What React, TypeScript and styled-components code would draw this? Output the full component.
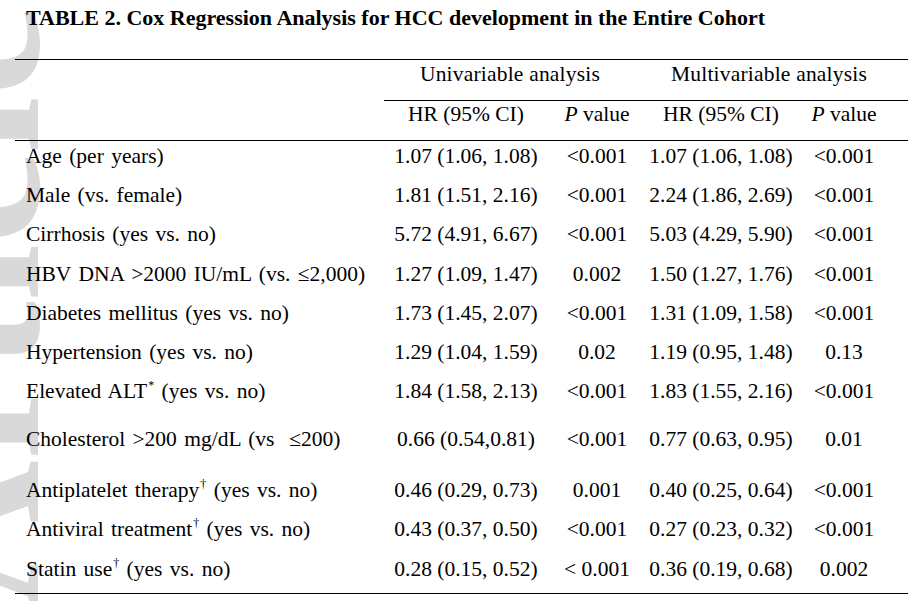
import React from 'react';
import styled, { createGlobalStyle } from 'styled-components';

const GlobalStyle = createGlobalStyle`
  html, body {
    margin: 0;
    padding: 0;
    background: #fff;
  }
  body {
    font-family: "Liberation Serif", "Times New Roman", serif;
    color: #000;
  }
`;

const Page = styled.div`
  position: relative;
  width: 917px;
  height: 601px;
  overflow: hidden;
  background: #fff;
`;

// faint "Accepted Article" stamp running up the left edge, mostly cropped off
const Watermark = styled.span`
  position: absolute;
  left: -134px;
  top: 5px;
  transform: rotate(-90deg) translateX(-100%);
  transform-origin: left top;
  white-space: nowrap;
  font-family: "Liberation Serif", serif;
  font-weight: bold;
  font-size: 205px;
  line-height: 205px;
  color: #d9d9d9;
  pointer-events: none;
  z-index: 0;
`;

const Content = styled.div`
  position: relative;
  z-index: 1;
  padding-top: 5.7px;
`;

const Title = styled.h2`
  margin: 0 0 29px 26px;
  font-size: 22px;
  line-height: 24px;
  font-weight: bold;
`;

const Table = styled.div`
  margin-left: 15px;
  width: 893px;
  border-top: 1px solid #000;
  border-bottom: 1px solid #000;
  font-size: 21.5px;
  line-height: 24px;
`;

const GroupRow = styled.div`
  display: grid;
  grid-template-columns: 369px 1fr;
  height: 41px;
`;

const GroupSpan = styled.div`
  display: grid;
  grid-template-columns: 262px 1fr;
  border-bottom: 1px solid #000;
  box-sizing: border-box;
  height: 41px;
`;

const GroupCell = styled.div<{ $shift?: number }>`
  padding-top: 2.5px;
  padding-right: ${(p) => (p.$shift ? `${p.$shift}px` : '0')};
  text-align: center;
  white-space: nowrap;
  letter-spacing: 0.2px;
`;

const Row = styled.div<{ $extra?: number; $head?: boolean }>`
  display: grid;
  grid-template-columns: 369px 164px 98px 150px 96px;
  padding-right: 16px;
  box-sizing: border-box;
  padding-top: ${(p) => (p.$head ? '1.5px' : '3px')};
  height: ${(p) => (p.$head ? '40px' : `${39.3 + (p.$extra || 0)}px`)};
  border-bottom: ${(p) => (p.$head ? '1px solid #000' : 'none')};
`;

const Label = styled.div`
  padding-left: 11px;
  white-space: nowrap;
  word-spacing: 2px;
`;

const Cell = styled.div`
  text-align: center;
  white-space: nowrap;
`;

const Sup = styled.sup`
  font-size: 12px;
  line-height: 0;
  vertical-align: 9px;
  margin-left: 1px;
`;

const Italic = styled.i`
  font-style: italic;
`;

type DataRow = {
  label: React.ReactNode;
  hr1: string;
  p1: string;
  hr2: string;
  p2: string;
  extra?: number;
};

const rows: DataRow[] = [
  { label: 'Age (per years)', hr1: '1.07 (1.06, 1.08)', p1: '<0.001', hr2: '1.07 (1.06, 1.08)', p2: '<0.001' },
  { label: 'Male (vs. female)', hr1: '1.81 (1.51, 2.16)', p1: '<0.001', hr2: '2.24 (1.86, 2.69)', p2: '<0.001' },
  { label: 'Cirrhosis (yes vs. no)', hr1: '5.72 (4.91, 6.67)', p1: '<0.001', hr2: '5.03 (4.29, 5.90)', p2: '<0.001' },
  { label: 'HBV DNA >2000 IU/mL (vs. ≤2,000)', hr1: '1.27 (1.09, 1.47)', p1: '0.002', hr2: '1.50 (1.27, 1.76)', p2: '<0.001' },
  { label: 'Diabetes mellitus (yes vs. no)', hr1: '1.73 (1.45, 2.07)', p1: '<0.001', hr2: '1.31 (1.09, 1.58)', p2: '<0.001' },
  { label: 'Hypertension (yes vs. no)', hr1: '1.29 (1.04, 1.59)', p1: '0.02', hr2: '1.19 (0.95, 1.48)', p2: '0.13' },
  {
    label: (
      <>
        Elevated ALT<Sup>*</Sup> (yes vs. no)
      </>
    ),
    hr1: '1.84 (1.58, 2.13)',
    p1: '<0.001',
    hr2: '1.83 (1.55, 2.16)',
    p2: '<0.001',
    extra: 8.6,
  },
  {
    label: 'Cholesterol >200 mg/dL (vs \u00a0≤200)',
    hr1: '0.66 (0.54,0.81)',
    p1: '<0.001',
    hr2: '0.77 (0.63, 0.95)',
    p2: '0.01',
    extra: 11.7,
  },
  {
    label: (
      <>
        Antiplatelet therapy<Sup>†</Sup> (yes vs. no)
      </>
    ),
    hr1: '0.46 (0.29, 0.73)',
    p1: '0.001',
    hr2: '0.40 (0.25, 0.64)',
    p2: '<0.001',
    extra: -0.4,
  },
  {
    label: (
      <>
        Antiviral treatment<Sup>†</Sup> (yes vs. no)
      </>
    ),
    hr1: '0.43 (0.37, 0.50)',
    p1: '<0.001',
    hr2: '0.27 (0.23, 0.32)',
    p2: '<0.001',
  },
  {
    label: (
      <>
        Statin use<Sup>†</Sup> (yes vs. no)
      </>
    ),
    hr1: '0.28 (0.15, 0.52)',
    p1: '< 0.001',
    hr2: '0.36 (0.19, 0.68)',
    p2: '0.002',
  },
];

const App: React.FC = () => {
  return (
    <Page>
      <GlobalStyle />
      <Watermark>Accepted Article</Watermark>
      <Content>
        <Title>TABLE 2. Cox Regression Analysis for HCC development in the Entire Cohort</Title>
        <Table>
          <GroupRow>
            <div />
            <GroupSpan>
              <GroupCell $shift={10}>Univariable analysis</GroupCell>
              <GroupCell $shift={16}>Multivariable analysis</GroupCell>
            </GroupSpan>
          </GroupRow>
          <Row $head>
            <Label />
            <Cell>HR (95% CI)</Cell>
            <Cell>
              <Italic>P</Italic> value
            </Cell>
            <Cell>HR (95% CI)</Cell>
            <Cell>
              <Italic>P</Italic> value
            </Cell>
          </Row>
          {rows.map((r, i) => (
            <Row key={i} $extra={r.extra}>
              <Label>{r.label}</Label>
              <Cell>{r.hr1}</Cell>
              <Cell>{r.p1}</Cell>
              <Cell>{r.hr2}</Cell>
              <Cell>{r.p2}</Cell>
            </Row>
          ))}
        </Table>
      </Content>
    </Page>
  );
};

export default App;
